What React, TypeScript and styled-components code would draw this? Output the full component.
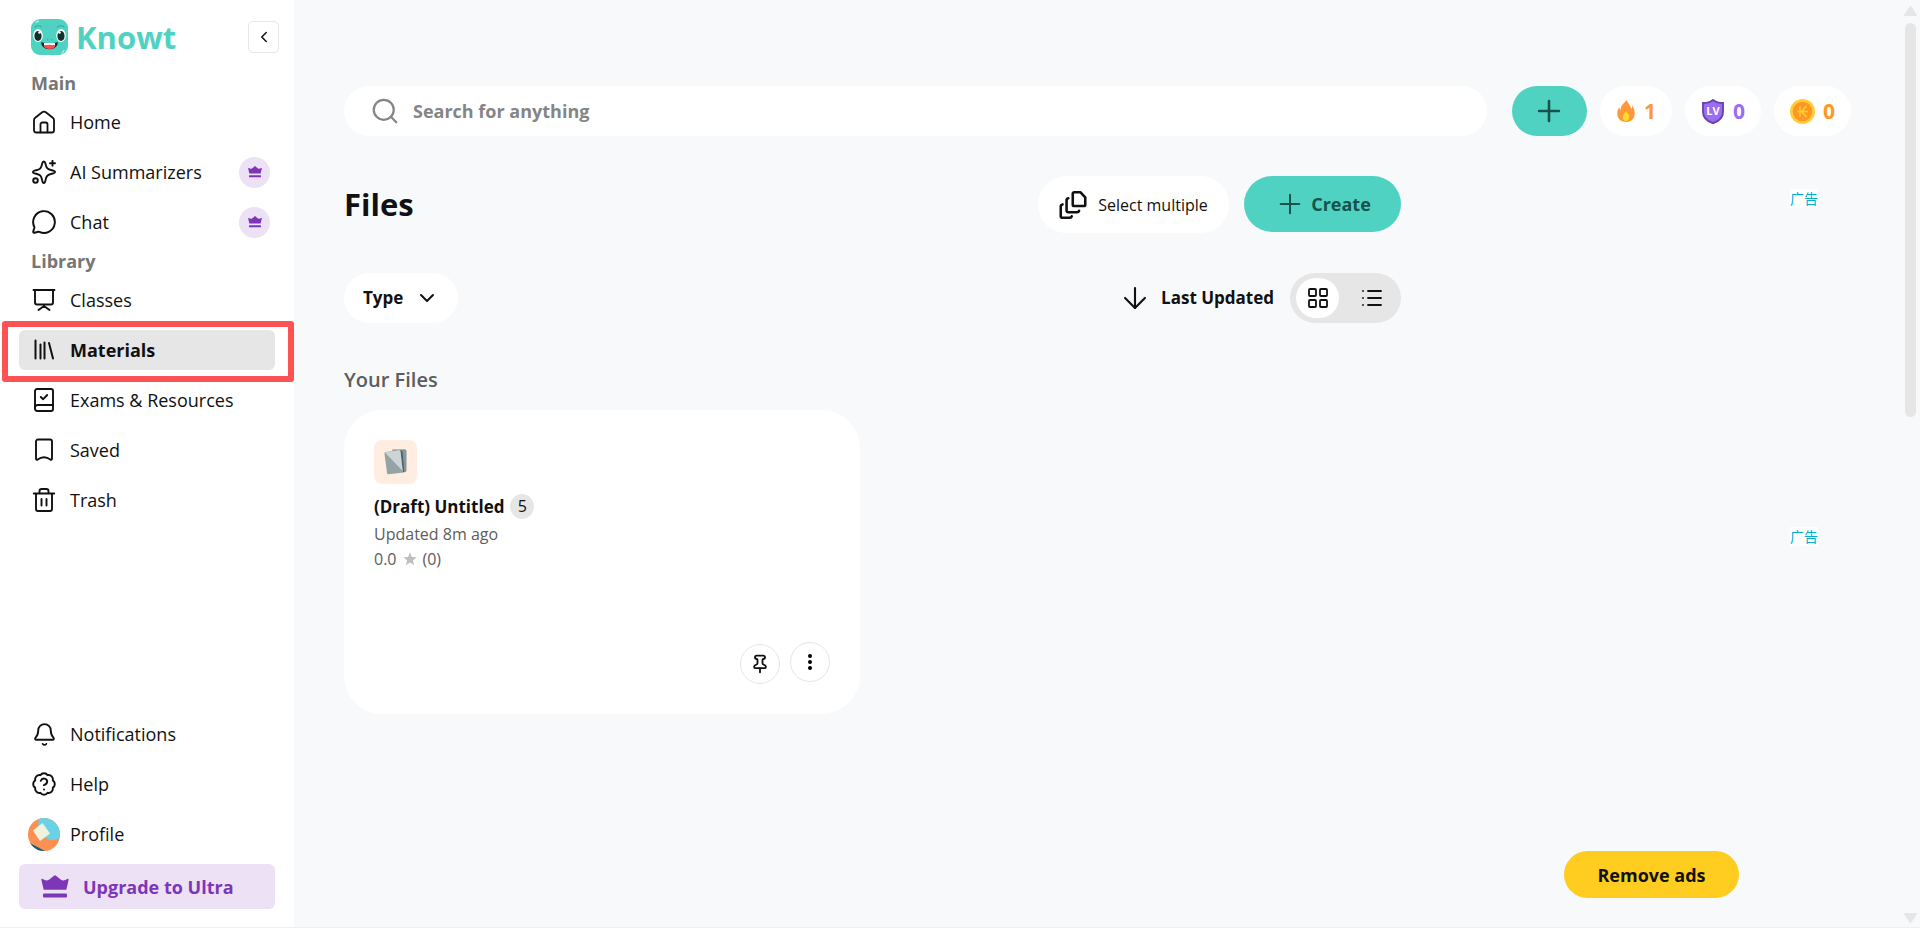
import React from "react";
import styled, { createGlobalStyle, css } from "styled-components";
import {
  ArrowDown,
  BadgeQuestionMark,
  Bell,
  ChevronDown,
  ChevronLeft,
  LayoutGrid,
  List,
  MessageCircle,
  Pin,
  Plus,
  Search,
} from "lucide-react";

const c = {
  ink: "#111111",
  muted: "#767676",
  dim: "#5d5d5d",
  page: "#f7f9fb",
  line: "#e6e6e6",
  teal: "#50d2c2",
  tealInk: "#15534b",
  purple: "#7d36b8",
  lilac: "#ede1f5",
};

const GlobalStyle = createGlobalStyle`
  *, *::before, *::after { box-sizing: border-box; }
  body {
    margin: 0;
    background: ${c.page};
    color: ${c.ink};
    font-family: "Open Sans", "Noto Sans CJK SC", sans-serif;
    font-size: 18px;
    line-height: 24px;
  }
  button, input { font: inherit; color: inherit; }
  button { border: 0; padding: 0; background: none; cursor: pointer; }
  svg { display: block; flex: none; }
  h1, h2, h3, p, ul { margin: 0; padding: 0; }
  ul { list-style: none; }
`;

const Shell = styled.div`
  display: flex;
  min-height: 100vh;
  border-bottom: 1px solid #efefef;
`;

/* ---------- Sidebar ---------- */

const Sidebar = styled.aside`
  position: sticky;
  top: 0;
  display: flex;
  flex-direction: column;
  flex: none;
  width: 294px;
  height: calc(100vh - 1px);
  padding: 19px 19px 18px;
  background: #fff;
`;

const Brand = styled.div`
  display: flex;
  align-items: center;
  justify-content: space-between;
  height: 36px;
  margin: 0 -4px 14px 12px;
`;

const LogoLink = styled.a`
  display: flex;
  align-items: center;
  gap: 8px;
  color: ${c.teal};
  font-size: 31px;
  line-height: 36px;
  font-weight: 700;
  text-decoration: none;
`;

const CollapseButton = styled.button`
  display: grid;
  place-items: center;
  width: 31px;
  height: 32px;
  border: 1px solid ${c.line};
  border-radius: 5px;
`;

const SectionLabel = styled.h2`
  height: 28px;
  padding-left: 12px;
  color: ${c.muted};
  font-size: 18px;
  line-height: 28px;
  font-weight: 700;
`;

const NavList = styled.ul`
  display: flex;
  flex-direction: column;
  gap: 10px;
  padding: 5px 0;
`;

const NavItem = styled.li`
  position: relative;
`;

const NavLink = styled.a<{ $active?: boolean }>`
  display: flex;
  align-items: center;
  height: 40px;
  padding: 0 5px 0 4px;
  gap: 5px;
  border-radius: 6px;
  color: ${c.ink};
  text-decoration: none;
  ${(p) => p.$active && css`background: ${c.line}; font-weight: 700;`}
`;

const IconSlot = styled.span`
  display: grid;
  place-items: center;
  width: 42px;
  flex: none;
`;

const PlusBadge = styled.span`
  display: grid;
  place-items: center;
  width: 31px;
  height: 31px;
  margin-left: auto;
  border-radius: 50%;
  background: ${c.lilac};
`;

const Highlight = styled.span`
  position: absolute;
  inset: -9px -19px -12px -17px;
  border: 6px solid #fc5252;
  border-radius: 3px;
  pointer-events: none;
`;

const Spacer = styled.div`
  flex: 1;
`;

const UpgradeLink = styled.a`
  display: flex;
  align-items: center;
  gap: 14px;
  height: 45px;
  margin-top: 5px;
  padding-left: 22px;
  border-radius: 6px;
  background: ${c.lilac};
  color: ${c.purple};
  font-weight: 700;
  text-decoration: none;
`;

/* ---------- Main ---------- */

const Main = styled.main`
  flex: 1;
  min-width: 0;
  padding: 86px 54px 40px 50px;
`;

const TopBar = styled.div`
  display: flex;
  height: 50px;
  gap: 13px;
`;

const SearchBox = styled.label`
  display: flex;
  align-items: center;
  flex: 1;
  gap: 13px;
  margin-right: 12px;
  padding: 0 26px;
  border-radius: 25px;
  background: #fff;
  color: #858585;
`;

const SearchInput = styled.input`
  flex: 1;
  min-width: 0;
  border: 0;
  outline: 0;
  padding: 0;
  background: none;
  font-weight: 700;
  &::placeholder { color: #858585; opacity: 1; }
`;

const AddButton = styled.button`
  display: grid;
  place-items: center;
  width: 75px;
  border-radius: 25px;
  background: ${c.teal};
  color: ${c.tealInk};
`;

const StatPill = styled.button<{ $color: string }>`
  display: flex;
  align-items: center;
  gap: 8px;
  padding: 0 16px;
  border-radius: 25px;
  background: #fff;
  color: ${(p) => p.$color};
  font-size: 21px;
  font-weight: 700;
`;

const Body = styled.div`
  display: flex;
  margin-top: 40px;
`;

const Content = styled.section`
  flex: 1;
  min-width: 0;
`;

const AdRail = styled.aside`
  display: flex;
  flex-direction: column;
  align-items: flex-end;
  gap: 319px;
  width: 450px;
  padding: 13px 33px 0 0;
`;

const AdTag = styled.a`
  width: 28px;
  height: 19px;
  background: #fff;
  color: #00aecd;
  font-size: 14px;
  line-height: 19px;
  text-align: center;
  white-space: nowrap;
  text-decoration: none;
`;

const Row = styled.div`
  display: flex;
  align-items: center;
  justify-content: space-between;
`;

const TitleRow = styled(Row)`
  align-items: flex-start;
`;

const Group = styled.div<{ $gap: number }>`
  display: flex;
  align-items: inherit;
  gap: ${(p) => p.$gap}px;
`;

const Title = styled.h1`
  font-size: 31px;
  line-height: 56px;
  font-weight: 700;
`;

const SelectButton = styled.button`
  display: flex;
  align-items: center;
  justify-content: center;
  gap: 11px;
  width: 191px;
  height: 57px;
  border-radius: 29px;
  background: #fff;
  font-size: 16px;
`;

const CreateButton = styled.button`
  display: flex;
  align-items: center;
  justify-content: center;
  gap: 5px;
  width: 157px;
  height: 56px;
  border-radius: 28px;
  background: ${c.teal};
  color: ${c.tealInk};
  font-weight: 700;
`;

const Filters = styled(Row)`
  margin-top: 40px;
`;

const TypeButton = styled.button`
  display: flex;
  align-items: center;
  gap: 12px;
  height: 50px;
  padding: 0 19px;
  border-radius: 25px;
  background: #fff;
  font-size: 17px;
  font-weight: 700;
`;

const SortButton = styled.button`
  display: flex;
  align-items: center;
  gap: 9px;
  font-size: 17px;
  font-weight: 700;
`;

const ViewToggle = styled.div`
  display: flex;
  align-items: center;
  gap: 11px;
  width: 111px;
  height: 50px;
  padding: 0 6px;
  border-radius: 25px;
  background: ${c.line};
`;

const ViewOption = styled.button<{ $on?: boolean }>`
  display: grid;
  place-items: center;
  width: 43px;
  height: 40px;
  border-radius: 20px;
  background: ${(p) => (p.$on ? "#fff" : "transparent")};
`;

const Subheading = styled.h2`
  margin-top: 43px;
  color: ${c.dim};
  font-size: 20px;
  line-height: 28px;
  font-weight: 600;
`;

const CardGrid = styled.div`
  display: grid;
  grid-template-columns: 1fr 1fr;
  gap: 25px;
  margin-top: 16px;
`;

const Card = styled.article`
  display: flex;
  flex-direction: column;
  min-height: 304px;
  padding: 30px;
  border-radius: 38px;
  background: #fff;
`;

const FileTile = styled.span`
  display: grid;
  place-items: center;
  width: 43px;
  height: 44px;
  border-radius: 8px;
  background: #ffede2;
`;

const CardTitle = styled.h3`
  display: flex;
  align-items: center;
  gap: 6px;
  margin-top: 10px;
  font-size: 17px;
  line-height: 25px;
  font-weight: 700;
`;

const CountBadge = styled.span`
  width: 24px;
  height: 25px;
  border-radius: 50%;
  background: ${c.line};
  font-size: 16px;
  font-weight: 400;
  text-align: center;
`;

const Meta = styled.p`
  display: flex;
  align-items: center;
  gap: 6px;
  margin-top: 3px;
  color: ${c.dim};
  font-size: 16px;
  line-height: 24px;
`;

const Rating = styled(Meta)`
  margin-top: 1px;
`;

const CardActions = styled.div`
  display: flex;
  justify-content: flex-end;
  align-items: flex-end;
  gap: 10px;
  height: 42px;
  margin-top: auto;
`;

const RoundButton = styled.button<{ $raised?: boolean }>`
  display: grid;
  place-items: center;
  align-self: ${(p) => (p.$raised ? "flex-start" : "flex-end")};
  width: 40px;
  height: 40px;
  border: 1px solid ${c.line};
  border-radius: 50%;
`;

const RemoveAds = styled.button`
  position: fixed;
  right: 181px;
  bottom: 30px;
  width: 175px;
  height: 47px;
  border-radius: 24px;
  background: #ffcd1f;
  font-weight: 700;
`;

const ScrollRail = styled.div`
  position: sticky;
  top: 0;
  display: flex;
  flex-direction: column;
  align-items: center;
  gap: 7px;
  flex: none;
  width: 15px;
  height: calc(100vh - 1px);
  padding: 6px 4px 4px 0;
`;

const ScrollThumb = styled.div`
  width: 11px;
  height: 43%;
  margin-bottom: auto;
  border-radius: 6px;
  background: ${c.line};
`;

/* ---------- Drawings ---------- */

type LineIconProps = { children: React.ReactNode; size?: number; stroke?: number };

const LineIcon = ({ children, size = 24, stroke = 2 }: LineIconProps) => (
  <svg
    width={size}
    height={size}
    viewBox="0 0 24 24"
    fill="none"
    stroke="currentColor"
    strokeWidth={stroke}
    strokeLinecap="round"
    strokeLinejoin="round"
    aria-hidden="true"
  >
    {children}
  </svg>
);

const HomeIcon = () => (
  <LineIcon stroke={1.8}>
    <path d="M2 10.2c0-1 .4-1.8 1.200-2.400l7-5.500a3 3 0 0 1 3.600 0l7 5.500c.8.6 1.200 1.400 1.200 2.400V20.500a2 2 0 0 1-2 2H4a2 2 0 0 1-2-2z" />
    <path d="M8.500 22.300v-8a1.800 1.800 0 0 1 1.800-1.800h3.400a1.800 1.800 0 0 1 1.800 1.800v8" />
  </LineIcon>
);

const SparkleIcon = () => (
  <LineIcon stroke={1.900}>
    <path d="M11.800 1.500c1 0 1.400.9 1.700 2.300.8 4.300 1.900 5.500 6.300 6.400 1.800.4 3.200.8 3.200 1.800s-1.400 1.400-3.200 1.800c-4.400.9-5.500 2.100-6.300 6.400-.3 1.400-.7 2.800-1.700 2.800s-1.400-1.400-1.700-2.800c-.8-4.300-1.900-5.500-6-6.400C2.500 13.500 1 13 1 12s1.500-1.400 3.100-1.800c4.100-.9 5.200-2.100 6-6.400.3-1.400.7-2.300 1.700-2.300z" />
    <path d="M20.500.8v5M18 3.300h5" />
    <circle cx="3.500" cy="20.500" r="2.300" />
  </LineIcon>
);

const BoardIcon = () => (
  <LineIcon stroke={1.900}>
    <path d="M1.500 2h21M3 2v12.500a2 2 0 0 0 2 2h14a2 2 0 0 0 2-2V2M12 16.500v1.500M6.500 22l5.500-4 5.500 4" />
  </LineIcon>
);

const ShelfIcon = () => (
  <LineIcon>
    <path d="M3.500 2.500v18M8.500 6.500v14M12.500 4.500v16M17 5l4 15.500" />
  </LineIcon>
);

const BookIcon = () => (
  <LineIcon stroke={1.900}>
    <path d="M5 1h14a2 2 0 0 1 2 2v18a2 2 0 0 1-2 2H5.500A2.500 2.500 0 0 1 3 20.500V3a2 2 0 0 1 2-2z" />
    <path d="M3 19.500A2.500 2.500 0 0 1 5.500 17H21M8.800 9l2.400 2.200L15.200 7" />
  </LineIcon>
);

const SavedIcon = () => (
  <LineIcon stroke={1.900}>
    <path d="M4 3.500a2 2 0 0 1 2-2h12a2 2 0 0 1 2 2v17.200c0 1-.8 1.400-1.600.9-4.500-3.400-8.300-3.400-12.800 0-.8.5-1.600.1-1.600-.9z" />
  </LineIcon>
);

const TrashIcon = () => (
  <LineIcon stroke={1.900}>
    <path d="M1.800 5.500h20.400M7.500 5V3.200A2.200 2.200 0 0 1 9.700 1h4.600a2.200 2.200 0 0 1 2.200 2.200V5M4 5.500V21a2 2 0 0 0 2 2h12a2 2 0 0 0 2-2V5.500M9.500 11v6.500M14.500 11v6.500" />
  </LineIcon>
);

const CopiesIcon = () => (
  <LineIcon size={28} stroke={2.200}>
    <path d="M13 1.100h5.500L22.500 5.500v6.200c0 .7-.5 1.200-1.200 1.200H13c-.7 0-1.200-.5-1.200-1.200V2.300c0-.7.5-1.200 1.200-1.200z" />
    <path d="M8 6.200c-1.100.2-1.500.9-1.500 1.800v8.700c0 .9.600 1.500 1.500 1.500h7.500c.9 0 1.500-.4 1.700-1.200M3 11.500c-1.100.2-1.500.9-1.500 1.800v8.300c0 .9.600 1.300 1.500 1.300h6.200c.9 0 1.500-.4 1.700-1.200" />
  </LineIcon>
);

const CrownMark = ({ size }: { size: number }) => (
  <svg width={size} viewBox="0 0 28 23" fill={c.purple} aria-hidden="true">
    <path d="M.3 4.500c.1-.7.8-.9 1.400-.5 2.200 1.500 4.300 2 6.300.8L13 .8c.7-.8 1.300-.8 2 0L20 4.800c2 1.200 4.100.7 6.300-.8.6-.4 1.300-.2 1.400.5L25.300 14.800H2.700z" />
    <rect x="2" y="18.500" width="24" height="4" rx="1" />
  </svg>
);

const Mascot = () => (
  <svg width="37" height="36" viewBox="0 0 37 36" aria-hidden="true">
    <rect width="37" height="36" rx="9" fill={c.teal} />
    <path d="M4 8Q7 5.500 10.500 8M26.500 8Q30 5.500 33 8" stroke="#37ad9f" strokeWidth="1.200" fill="none" strokeLinecap="round" />
    <path d="M5 3.200 7.500 2M31 34l2-2.500" stroke="#c9f3ee" strokeWidth="1.200" strokeLinecap="round" />
    <ellipse cx="7" cy="16.500" rx="4.800" ry="6.500" fill="#fff" />
    <ellipse cx="30" cy="16.500" rx="4.800" ry="6.500" fill="#fff" />
    <ellipse cx="7" cy="17" rx="3.600" ry="5" fill="#12302d" />
    <ellipse cx="30" cy="17" rx="3.600" ry="5" fill="#12302d" />
    <circle cx="8.500" cy="13.500" r="1.300" fill="#fff" />
    <circle cx="28.500" cy="13.500" r="1.300" fill="#fff" />
    <circle cx="16.500" cy="20.800" r=".8" fill="#37ad9f" />
    <circle cx="20.500" cy="20.800" r=".8" fill="#37ad9f" />
    <path d="M10.500 22.800C12 24 14 24 18.500 24s6.500 0 8-1.200c1 2.700-1.500 7.400-8 7.400s-9-4.700-8-7.400z" fill="#12302d" />
    <path d="M13 24h11v2.500H13z" fill="#fff" />
    <path d="M12.500 27q6-2.500 12 0c-1.500 2.200-3.200 3-6 3s-4.500-.8-6-3z" fill="#ff4d55" />
  </svg>
);

const Avatar = () => (
  <svg width="32" height="33" viewBox="0 0 32 33" aria-hidden="true">
    <clipPath id="avatar-clip"><ellipse cx="16" cy="16.500" rx="16" ry="16.500" /></clipPath>
    <g clipPath="url(#avatar-clip)">
      <rect width="32" height="33" fill="#fb9050" />
      <path d="M12 0C7 8 13 21 24 22c4 0 7-1 9-3V-2H12z" fill="#69d2e7" />
      <path d="M5 12.500 14.500 5 22 15.500 12 23z" fill="#eff3dc" />
      <path d="M0 24 17 33H0z" fill="#0b5d86" />
    </g>
  </svg>
);

const Flame = () => (
  <svg width="20" height="24" viewBox="-1 0 20 24" aria-hidden="true">
    <path d="M9.800 1c.8 3 4.200 5.800 4.200 9 1-.8 1.300-2.200 1.200-3.700C17 9 18 12.500 17.600 15.500 17.200 20.500 13.500 23 9 23S.5 20 .3 15.500C.2 12 1.200 9.800 2.400 8c0 1.300.3 2.300 1.200 3C3.700 6.500 6.500 4.500 9.800 1z" fill="#ff9838" />
    <path d="M9 12c1.500 2.200 3.200 3.900 3.200 6.300 0 2.300-1.400 3.700-3.200 3.700s-3.200-1.400-3.200-3.700c0-2.400 1.700-4.100 3.200-6.300z" fill="#ffdc2b" />
  </svg>
);

const ShieldBadge = styled.span`
  display: grid;
  place-items: center;
  width: 24px;
  color: #fff;
  font-size: 11px;
  line-height: 12px;
  svg { grid-area: 1 / 1; }
  span { grid-area: 1 / 1; }
`;

const Shield = () => (
  <ShieldBadge>
    <svg width="22" height="25" viewBox="0 0 22 25" aria-hidden="true">
      <path d="M11 .9C13.700 3 17.500 4 21 4v9c0 5-4 9.200-10 11.200C5 22.200 1 18 1 13V4c3.500 0 7.300-1 10-3.100z" fill="#9a6df2" stroke="#6845ab" strokeWidth="1.900" />
    </svg>
    <span>LV</span>
  </ShieldBadge>
);

const Coin = () => (
  <svg width="25" height="25" viewBox="0 0 25 25" aria-hidden="true">
    <circle cx="12.500" cy="12.500" r="12.500" fill="#ffcd37" />
    <circle cx="12.500" cy="12.500" r="9.800" fill="#ff9823" />
    <path d="M10 7v11M16.500 7l-5 5.500 5 5.500M7 12.500h11" stroke="#ffcd37" strokeWidth="1.600" fill="none" />
  </svg>
);

const CardsArt = () => (
  <svg width="23" height="26" viewBox="0 0 23 26" aria-hidden="true">
    <path d="M8 .5 20.500.3c1.200 0 2 .8 2 2v19c0 1-.7 1.800-1.700 1.900L18 23.500z" fill="#87989b" />
    <path d="m15.500 1.500 3 .4 1.800 20.500-1.800 1z" fill="#4d6269" />
    <path d="M2 3 14.500 1.200c1.100-.2 1.900.4 2 1.500L18.800 22c.1 1-.5 1.600-1.400 1.700L5 25.300c-1.100.1-1.900-.5-2-1.600L.5 5C.4 4 1 3.200 2 3z" fill="#94a3a6" />
    <path d="M1 3.500 14.500 1.200c1.100-.2 1.900.4 2 1.500L18.700 22z" fill="#ced4d6" />
  </svg>
);

const Star = () => (
  <svg width="14" height="14" viewBox="0 0 14 14" fill="#bfbfbf" aria-hidden="true">
    <path d="m7 .3 1.800 4.600 4.900.3-3.800 3.200 1.300 4.900L7 10.600l-4.200 2.700 1.300-4.900L.3 5.200l4.900-.3z" />
  </svg>
);

const Dots = () => (
  <svg width="4" height="16" viewBox="0 0 4 16" aria-hidden="true">
    <circle cx="2" cy="2" r="2" />
    <circle cx="2" cy="8" r="2" />
    <circle cx="2" cy="14" r="2" />
  </svg>
);

const Arrow = ({ down }: { down?: boolean }) => (
  <svg width="13" height="10" viewBox="0 0 13 10" fill={c.line} stroke={c.line} strokeWidth="2" strokeLinejoin="round" aria-hidden="true">
    <path d={down ? "M1 1h11L6.500 9z" : "M1 9h11L6.500 1z"} />
  </svg>
);

/* ---------- Page ---------- */

type Item = { label: string; icon: React.ReactNode; plus?: boolean; active?: boolean };

const mainItems: Item[] = [
  { label: "Home", icon: <HomeIcon /> },
  { label: "AI Summarizers", icon: <SparkleIcon />, plus: true },
  { label: "Chat", icon: <MessageCircle size={26} strokeWidth={1.8} />, plus: true },
];

const libraryItems: Item[] = [
  { label: "Classes", icon: <BoardIcon /> },
  { label: "Materials", icon: <ShelfIcon />, active: true },
  { label: "Exams & Resources", icon: <BookIcon /> },
  { label: "Saved", icon: <SavedIcon /> },
  { label: "Trash", icon: <TrashIcon /> },
];

const accountItems: Item[] = [
  { label: "Notifications", icon: <Bell size={25} strokeWidth={1.8} /> },
  { label: "Help", icon: <BadgeQuestionMark size={26} strokeWidth={1.8} /> },
  { label: "Profile", icon: <Avatar /> },
];

const Nav = ({ items }: { items: Item[] }) => (
  <NavList>
    {items.map((item) => (
      <NavItem key={item.label}>
        <NavLink href="#" $active={item.active} aria-current={item.active ? "page" : undefined}>
          <IconSlot>{item.icon}</IconSlot>
          {item.label}
          {item.plus && <PlusBadge><CrownMark size={14} /></PlusBadge>}
        </NavLink>
        {item.active && <Highlight />}
      </NavItem>
    ))}
  </NavList>
);

export default function App() {
  return (
    <>
      <GlobalStyle />
      <Shell>
        <Sidebar>
          <Brand>
            <LogoLink href="#"><Mascot />Knowt</LogoLink>
            <CollapseButton aria-label="Collapse sidebar"><ChevronLeft size={18} /></CollapseButton>
          </Brand>
          <SectionLabel>Main</SectionLabel>
          <Nav items={mainItems} />
          <SectionLabel>Library</SectionLabel>
          <Nav items={libraryItems} />
          <Spacer />
          <Nav items={accountItems} />
          <UpgradeLink href="#"><CrownMark size={28} />Upgrade to Ultra</UpgradeLink>
        </Sidebar>

        <Main>
          <TopBar>
            <SearchBox>
              <Search size={30} strokeWidth={1.8} aria-hidden="true" />
              <SearchInput type="text" placeholder="Search for anything" aria-label="Search for anything" />
            </SearchBox>
            <AddButton aria-label="Add"><Plus size={34} strokeWidth={1.8} /></AddButton>
            <StatPill $color="#ff9838"><Flame />1</StatPill>
            <StatPill $color="#9a6df2"><Shield />0</StatPill>
            <StatPill $color="#ff9823"><Coin />0</StatPill>
          </TopBar>

          <Body>
            <Content>
              <TitleRow>
                <Title>Files</Title>
                <Group $gap={15}>
                  <SelectButton><CopiesIcon />Select multiple</SelectButton>
                  <CreateButton><Plus size={32} strokeWidth={1.5} />Create</CreateButton>
                </Group>
              </TitleRow>

              <Filters>
                <TypeButton>Type<ChevronDown size={24} /></TypeButton>
                <Group $gap={16}>
                  <SortButton><ArrowDown size={34} strokeWidth={1.5} />Last Updated</SortButton>
                  <ViewToggle>
                    <ViewOption $on aria-label="Grid view"><LayoutGrid size={24} strokeWidth={1.8} /></ViewOption>
                    <ViewOption aria-label="List view"><List size={24} strokeWidth={1.8} /></ViewOption>
                  </ViewToggle>
                </Group>
              </Filters>

              <Subheading>Your Files</Subheading>
              <CardGrid>
                <Card>
                  <FileTile><CardsArt /></FileTile>
                  <CardTitle>(Draft) Untitled<CountBadge>5</CountBadge></CardTitle>
                  <Meta>Updated 8m ago</Meta>
                  <Rating>0.0 <Star /> (0)</Rating>
                  <CardActions>
                    <RoundButton aria-label="Pin"><Pin size={20} strokeWidth={2.200} /></RoundButton>
                    <RoundButton $raised aria-label="More options"><Dots /></RoundButton>
                  </CardActions>
                </Card>
              </CardGrid>
            </Content>

            <AdRail>
              <AdTag href="#">广告</AdTag>
              <AdTag href="#">广告</AdTag>
            </AdRail>
          </Body>
        </Main>

        <ScrollRail aria-hidden="true">
          <Arrow />
          <ScrollThumb />
          <Arrow down />
        </ScrollRail>
      </Shell>
      <RemoveAds>Remove ads</RemoveAds>
    </>
  );
}
